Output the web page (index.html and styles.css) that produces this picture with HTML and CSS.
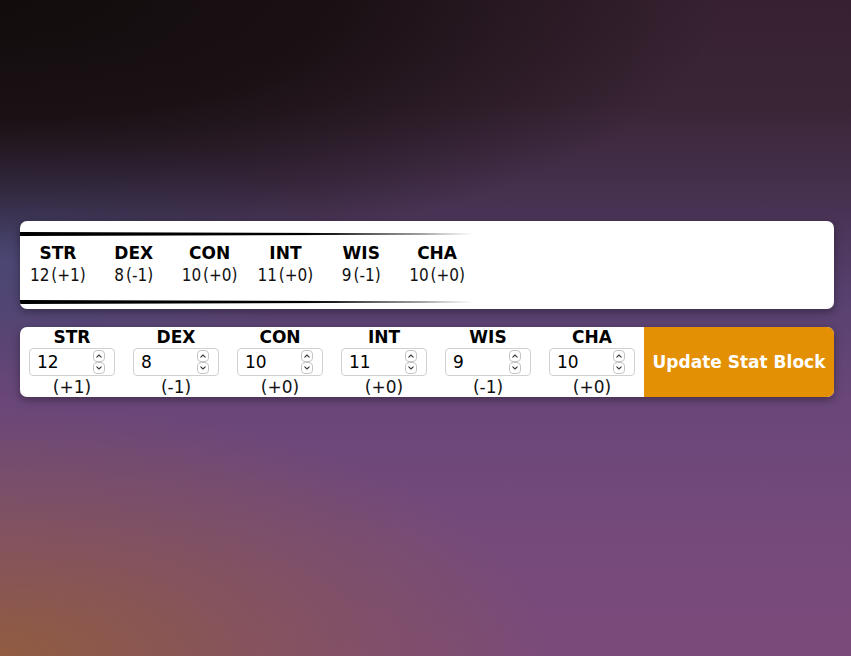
FILE: index.html
```html
<!DOCTYPE html>
<html lang="en">
<head>
<meta charset="utf-8">
<title>Ability Scores</title>
<link rel="stylesheet" href="styles.css">
</head>
<body>
<main class="page">
  <section class="card display">
    <div class="abilities">
      <div class="rule"></div>
      <div class="ability-grid">
        <div class="ability"><span class="label">STR</span><span class="score">12 (+1)</span></div>
        <div class="ability"><span class="label">DEX</span><span class="score">8 (-1)</span></div>
        <div class="ability"><span class="label">CON</span><span class="score">10 (+0)</span></div>
        <div class="ability"><span class="label">INT</span><span class="score">11 (+0)</span></div>
        <div class="ability"><span class="label">WIS</span><span class="score">9 (-1)</span></div>
        <div class="ability"><span class="label">CHA</span><span class="score">10 (+0)</span></div>
      </div>
      <div class="rule"></div>
    </div>
  </section>

  <form class="card editor">
    <label class="field"><span class="label">STR</span>
      <span class="numbox"><input class="num" type="number" value="12"><svg class="spin" viewBox="0 0 12 24" width="12" height="24"><rect x="0.5" y="0.5" width="11" height="11" rx="3.5"/><rect x="0.5" y="12.5" width="11" height="11" rx="3.5"/><path d="M3.8 7.2 6 5 8.2 7.2"/><path d="M3.8 16.8 6 19 8.2 16.8"/></svg></span>
      <span class="mod">(+1)</span></label>
    <label class="field"><span class="label">DEX</span>
      <span class="numbox"><input class="num" type="number" value="8"><svg class="spin" viewBox="0 0 12 24" width="12" height="24"><rect x="0.5" y="0.5" width="11" height="11" rx="3.5"/><rect x="0.5" y="12.5" width="11" height="11" rx="3.5"/><path d="M3.8 7.2 6 5 8.2 7.2"/><path d="M3.8 16.8 6 19 8.2 16.8"/></svg></span>
      <span class="mod">(-1)</span></label>
    <label class="field"><span class="label">CON</span>
      <span class="numbox"><input class="num" type="number" value="10"><svg class="spin" viewBox="0 0 12 24" width="12" height="24"><rect x="0.5" y="0.5" width="11" height="11" rx="3.5"/><rect x="0.5" y="12.5" width="11" height="11" rx="3.5"/><path d="M3.8 7.2 6 5 8.2 7.2"/><path d="M3.8 16.8 6 19 8.2 16.8"/></svg></span>
      <span class="mod">(+0)</span></label>
    <label class="field"><span class="label">INT</span>
      <span class="numbox"><input class="num" type="number" value="11"><svg class="spin" viewBox="0 0 12 24" width="12" height="24"><rect x="0.5" y="0.5" width="11" height="11" rx="3.5"/><rect x="0.5" y="12.5" width="11" height="11" rx="3.5"/><path d="M3.8 7.2 6 5 8.2 7.2"/><path d="M3.8 16.8 6 19 8.2 16.8"/></svg></span>
      <span class="mod">(+0)</span></label>
    <label class="field"><span class="label">WIS</span>
      <span class="numbox"><input class="num" type="number" value="9"><svg class="spin" viewBox="0 0 12 24" width="12" height="24"><rect x="0.5" y="0.5" width="11" height="11" rx="3.5"/><rect x="0.5" y="12.5" width="11" height="11" rx="3.5"/><path d="M3.8 7.2 6 5 8.2 7.2"/><path d="M3.8 16.8 6 19 8.2 16.8"/></svg></span>
      <span class="mod">(-1)</span></label>
    <label class="field"><span class="label">CHA</span>
      <span class="numbox"><input class="num" type="number" value="10"><svg class="spin" viewBox="0 0 12 24" width="12" height="24"><rect x="0.5" y="0.5" width="11" height="11" rx="3.5"/><rect x="0.5" y="12.5" width="11" height="11" rx="3.5"/><path d="M3.8 7.2 6 5 8.2 7.2"/><path d="M3.8 16.8 6 19 8.2 16.8"/></svg></span>
      <span class="mod">(+0)</span></label>
    <button class="update" type="button">Update Stat Block</button>
  </form>
</main>
</body>
</html>
```

FILE: styles.css
```css
html, body {
  margin: 0;
  height: 100%;
}

body {
  font-family: "DejaVu Sans", sans-serif;
  color: #000;
  background:
    radial-gradient(ellipse 85% 40% at 0% 0%, rgba(18, 12, 12, 1) 0%, rgba(18, 12, 12, 0.8) 45%, rgba(18, 12, 12, 0) 100%),
    radial-gradient(ellipse 40% 20% at 0% 38%, rgba(74, 74, 120, 0.85) 0%, rgba(74, 74, 120, 0) 100%),
    radial-gradient(ellipse 65% 38% at 0% 100%, rgba(145, 92, 64, 1) 0%, rgba(145, 92, 64, 0.5) 45%, rgba(145, 92, 64, 0) 100%),
    linear-gradient(to bottom, #372131 0%, #3a2536 16%, #463150 30%, #584170 46%, #6a4779 62%, #754a7b 82%, #7b4a7a 100%);
}

.page {
  padding: 221px 17px 0 20px;
  display: flex;
  flex-direction: column;
  gap: 18px;
}

.card {
  background: #fff;
  border-radius: 7px;
  box-shadow: 0 3px 8px rgba(0, 0, 0, 0.35);
  overflow: hidden;
}

/* display card */
.display {
  height: 88px;
  padding-top: 11px;
  box-sizing: border-box;
}

.abilities {
  width: 455px;
}

.rule {
  height: 4px;
  background: linear-gradient(to right, #000 0%, #000 62%, rgba(0, 0, 0, 0.55) 88%, rgba(0, 0, 0, 0) 100%);
  clip-path: polygon(0 0, 100% 35%, 100% 65%, 0 100%);
}

.ability-grid {
  display: grid;
  grid-template-columns: repeat(6, 1fr);
  padding: 7px 0 14px;
}

.ability {
  display: flex;
  flex-direction: column;
  align-items: center;
}

.label {
  font-weight: bold;
  font-size: 17px;
  line-height: 21px;
  color: #000;
}

.score {
  font-family: "DejaVu Sans Condensed", "DejaVu Sans", sans-serif;
  font-stretch: condensed;
  font-size: 17px;
  line-height: 22px;
  color: #111;
  word-spacing: -3px;
}

/* editor card */
.editor {
  display: grid;
  grid-template-columns: repeat(6, 104px) 1fr;
  height: 70px;
}

.field {
  display: flex;
  flex-direction: column;
  align-items: center;
}

.field .label {
  line-height: 20px;
}

.numbox {
  box-sizing: border-box;
  display: flex;
  align-items: center;
  width: 86px;
  height: 28px;
  margin-top: 1px;
  padding: 0 9px 0 7px;
  border: 1px solid #d0d0d0;
  border-radius: 4px;
  background: #fff;
}

.num {
  flex: 1;
  min-width: 0;
  height: 100%;
  padding: 0;
  margin: 0;
  border: 0;
  outline: none;
  background: transparent;
  font-family: "DejaVu Sans", sans-serif;
  font-size: 17px;
  color: #000;
  -moz-appearance: textfield;
}

.num::-webkit-inner-spin-button,
.num::-webkit-outer-spin-button {
  -webkit-appearance: none;
  margin: 0;
  display: none;
}

.spin {
  flex: none;
}

.spin rect {
  fill: #fff;
  stroke: #c4c4c4;
  stroke-width: 1;
}

.spin path {
  fill: none;
  stroke: #3a3a3a;
  stroke-width: 1.1;
  stroke-linecap: round;
  stroke-linejoin: round;
}

.mod {
  font-size: 17px;
  line-height: 20px;
  margin-top: 1px;
  color: #111;
}

.update {
  border: 0;
  margin: 0;
  background: #e39004;
  color: #fff;
  font-family: "DejaVu Sans", sans-serif;
  font-weight: bold;
  font-size: 17px;
  padding: 0 6px;
  cursor: pointer;
}
```
